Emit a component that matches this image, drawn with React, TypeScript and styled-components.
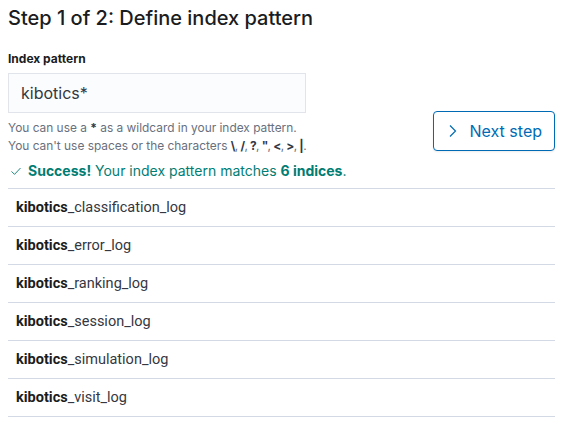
import React from "react";
import styled, { createGlobalStyle } from "styled-components";

const GlobalStyle = createGlobalStyle`
  body {
    margin: 0;
    background: #ffffff;
    font-family: Inter, "Noto Sans", sans-serif;
    color: #1a1c21;
  }
`;

const indices = [
  "classification_log",
  "error_log",
  "ranking_log",
  "session_log",
  "simulation_log",
  "visit_log",
];

const Page = styled.div`
  padding: 4px 16px 0 8px;
`;

const Title = styled.h1`
  margin: 0;
  font-size: 20px;
  line-height: 28px;
  font-weight: 500;
  color: #1a1c21;
`;

const TopRow = styled.div`
  display: flex;
  justify-content: space-between;
  align-items: flex-end;
  margin-top: 18px;
`;

const Field = styled.div`
  width: 298px;
`;

const Label = styled.label`
  display: block;
  font-size: 12px;
  line-height: 18px;
  font-weight: 700;
  color: #1a1c21;
  margin-bottom: 5px;
`;

const Input = styled.input`
  box-sizing: border-box;
  width: 100%;
  height: 40px;
  padding: 0 12px;
  border: 1px solid #e1e4ea;
  background: #fbfcfd;
  font-family: Inter, "Noto Sans", sans-serif;
  font-size: 16px;
  color: #343741;
  outline: none;
`;

const Help = styled.div`
  margin-top: 6px;
  font-size: 11.9px;
  line-height: 18px;
  color: #69707d;
  white-space: nowrap;

  b {
    color: #343741;
    font-weight: 700;
  }
`;

const Chars = styled.span`
  letter-spacing: -0.6px;
`;

const NextButton = styled.button`
  display: flex;
  align-items: center;
  gap: 12px;
  height: 40px;
  padding: 0 12px 0 14px;
  margin-bottom: 4px;
  border: 1px solid #006bb4;
  border-radius: 4px;
  background: #ffffff;
  color: #006bb4;
  font-family: Inter, "Noto Sans", sans-serif;
  font-size: 16px;
  cursor: pointer;
  box-shadow: 0 1px 2px rgba(0, 0, 0, 0.08);
`;

const Success = styled.div`
  display: flex;
  align-items: center;
  gap: 6px;
  margin-top: 6px;
  padding-left: 2px;
  font-size: 14px;
  line-height: 20px;
  color: #017d73;

  b {
    font-weight: 700;
  }
`;

const List = styled.ul`
  list-style: none;
  margin: 7px 0 0;
  padding: 0;
  border-top: 1px solid #d3dae6;
`;

const Row = styled.li`
  height: 37px;
  display: flex;
  align-items: center;
  padding-left: 8px;
  border-bottom: 1px solid #d3dae6;
  font-family: Roboto, "Noto Sans", sans-serif;
  font-size: 14.5px;
  color: #343741;

  b {
    font-weight: 700;
    color: #1a1c21;
  }
`;

const Check = () => (
  <svg width="12" height="12" viewBox="0 0 16 16" fill="none">
    <path d="M2 8.5 L6 12.5 L14 4" stroke="#017d73" strokeWidth="1.2" />
  </svg>
);

const Chevron = () => (
  <svg width="10" height="14" viewBox="0 0 10 14" fill="none">
    <path d="M2 1.5 L7.5 7 L2 12.5" stroke="#006bb4" strokeWidth="1.2" />
  </svg>
);

export default function App() {
  return (
    <Page>
      <GlobalStyle />
      <Title>Step 1 of 2: Define index pattern</Title>
      <TopRow>
        <Field>
          <Label>Index pattern</Label>
          <Input defaultValue="kibotics*" />
          <Help>
            You can use a <b>*</b> as a wildcard in your index pattern.
            <br />
            You can't use spaces or the characters{" "}
            <Chars>
              <b>\</b>, <b>/</b>, <b>?</b>, <b>"</b>, <b>&lt;</b>, <b>&gt;</b>,{" "}
              <b>|</b>.
            </Chars>
          </Help>
        </Field>
        <NextButton>
          <Chevron />
          Next step
        </NextButton>
      </TopRow>
      <Success>
        <Check />
        <span>
          <b>Success!</b> Your index pattern matches <b>6 indices</b>.
        </span>
      </Success>
      <List>
        {indices.map((name) => (
          <Row key={name}>
            <b>kibotics</b>_{name}
          </Row>
        ))}
      </List>
    </Page>
  );
}
